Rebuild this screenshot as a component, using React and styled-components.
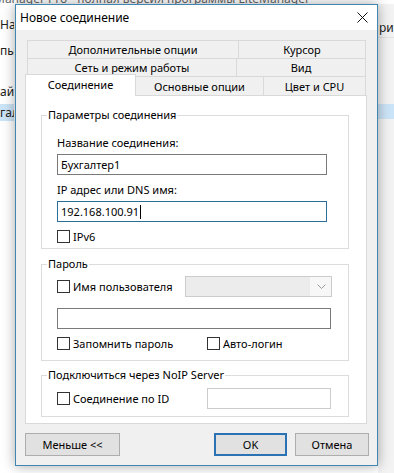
import React from 'react'
import styled, { createGlobalStyle } from 'styled-components'

const Global = createGlobalStyle`
  html, body {
    margin: 0;
    padding: 0;
    background: #ffffff;
  }
  body {
    font-family: "Noto Sans", "Liberation Sans", sans-serif;
    font-size: 11px;
    color: #000;
  }
`

const Screen = styled.div`
  position: relative;
  width: 394px;
  height: 473px;
  overflow: hidden;
  background: #ffffff;
`

/* the main program window behind the dialog */
const BackWindow = styled.div`
  display: flex;
  flex-direction: column;
  height: 100%;
`
const BackTitle = styled.div`
  height: 4px;
  overflow: hidden;
  white-space: nowrap;
  color: #666;
  font-size: 12px;
  line-height: 12px;
  span {
    display: block;
    margin: -7px 0 0 -6px;
  }
`
const BackBody = styled.div`
  flex: 1;
  display: flex;
  justify-content: space-between;
`
const SidePane = styled.div`
  width: ${p => p.$w}px;
  display: flex;
  flex-direction: column;
  overflow: hidden;
  white-space: nowrap;
  background: ${p => p.$bg || '#ffffff'};
`
const BackRow = styled.div`
  height: ${p => p.$h || 16}px;
  line-height: ${p => p.$h || 16}px;
  margin-top: ${p => p.$gap}px;
  padding-left: ${p => p.$pad || 0}px;
  font-size: 12px;
  color: #222;
  background: ${p => (p.$sel ? '#cce4f7' : 'transparent')};
  border-bottom: ${p => (p.$line ? '1px solid #e3e3e3' : 'none')};
`

/* dialog */
const Dialog = styled.div`
  position: absolute;
  left: 15px;
  top: 4px;
  width: 363px;
  height: 462px;
  box-sizing: border-box;
  border: 1px solid #3f86b2;
  background: #f0f0f0;
  box-shadow: 0 0 12px rgba(0, 0, 0, 0.35);
  display: flex;
  flex-direction: column;
`
const TitleBar = styled.div`
  height: 25px;
  flex: none;
  display: flex;
  align-items: center;
  justify-content: space-between;
  padding: 0 9px 0 4px;
  background: #ffffff;
  font-size: 12px;
`
const Body = styled.div`
  padding: 10px 0 0 9px;
  display: flex;
  flex-direction: column;
`
const TabRow = styled.div`
  display: flex;
  align-items: flex-start;
  height: ${p => p.$h}px;
  margin-left: ${p => p.$indent}px;
`
const Tab = styled.div`
  box-sizing: border-box;
  width: ${p => p.$w}px;
  height: ${p => p.$h}px;
  margin-right: -1px;
  display: flex;
  align-items: center;
  justify-content: center;
  border: 1px solid #d9d9d9;
  border-bottom: none;
  background: #f0f0f0;
  white-space: nowrap;
`
const ActiveTab = styled(Tab)`
  position: relative;
  z-index: 1;
  margin-top: -2px;
  background: #ffffff;
  padding-bottom: 2px;
`
const Panel = styled.div`
  box-sizing: border-box;
  width: 342px;
  height: 329px;
  padding: 11px 17px 0 15px;
  background: #ffffff;
  border: 1px solid #d9d9d9;
`
const Group = styled.fieldset`
  margin: ${p => p.$top || 0}px 0 0 0;
  padding: ${p => p.$pt}px 0 ${p => p.$pb}px 15px;
  min-width: 0;
  border: 1px solid #dcdcdc;
`
const Legend = styled.legend`
  margin-left: -10px;
  padding: 0 1px;
  line-height: 16px;
`
const Label = styled.div`
  line-height: 16px;
  margin-top: ${p => p.$top || 0}px;
`
const TextBox = styled.div`
  box-sizing: border-box;
  width: ${p => p.$w}px;
  height: 21px;
  margin-top: ${p => p.$top || 0}px;
  padding-left: 3px;
  display: flex;
  align-items: center;
  background: #ffffff;
  border: 1px solid ${p => (p.$focus ? '#2a6f98' : p.$disabled ? '#cccccc' : '#7a7a7a')};
  white-space: nowrap;
`
const Caret = styled.span`
  display: inline-block;
  width: 1px;
  height: 14px;
  margin-left: 1px;
  background: #000;
`
const Row = styled.div`
  display: flex;
  align-items: center;
  height: ${p => p.$h || 16}px;
  margin-top: ${p => p.$top || 0}px;
`
const Check = styled.label`
  display: flex;
  align-items: center;
  gap: 3px;
  width: ${p => (p.$w ? `${p.$w}px` : 'auto')};
  flex: none;
  white-space: nowrap;
`
const Box = styled.span`
  box-sizing: border-box;
  width: 13px;
  height: 13px;
  border: 1px solid #333333;
  background: #ffffff;
`
const Combo = styled.div`
  box-sizing: border-box;
  width: 147px;
  height: 21px;
  display: flex;
  align-items: center;
  justify-content: flex-end;
  border: 1px solid #cccccc;
  background: linear-gradient(to right, #ececec 0 124px, #f7f7f7 124px);
  padding-right: 5px;
`
const ButtonRow = styled.div`
  display: flex;
  width: 344px;
  margin-top: 9px;
  gap: 8px;
`
const Button = styled.button`
  box-sizing: border-box;
  width: ${p => p.$w}px;
  height: 23px;
  margin: 0;
  margin-left: ${p => (p.$push ? 'auto' : '0')};
  padding: 0;
  font: inherit;
  color: #000;
  background: #e1e1e1;
  border: ${p => (p.$default ? '2px solid #2b72b5' : '1px solid #adadad')};
`

const CheckItem = ({ w, children }) => (
  <Check $w={w}>
    <Box />
    <span>{children}</span>
  </Check>
)

export default function App() {
  return (
    <Screen>
      <Global />
      <BackWindow>
        <BackTitle>
          <span>Manager Pro - полная версия программы LiteManager</span>
        </BackTitle>
        <BackBody>
          <SidePane $w={14}>
            <BackRow $gap={13}>Наз</BackRow>
            <BackRow $gap={10}>пы</BackRow>
            <BackRow $gap={25}>айн</BackRow>
            <BackRow $gap={4} $h={17} $sel>гал</BackRow>
          </SidePane>
          <SidePane $w={16} $bg="#f3f3f3">
            <BackRow $gap={15} $h={18} $pad={1} $line>рий</BackRow>
            <BackRow $gap={66} $h={15} $sel />
          </SidePane>
        </BackBody>
      </BackWindow>

      <Dialog>
        <TitleBar>
          <span>Новое соединение</span>
          <svg width="11" height="11" viewBox="0 0 11 11">
            <path d="M0.5 0.5 L10.5 10.5 M10.5 0.5 L0.5 10.5" stroke="#111" strokeWidth="1" fill="none" />
          </svg>
        </TitleBar>
        <Body>
          <TabRow $h={18} $indent={2}>
            <Tab $w={212} $h={18}>Дополнительные опции</Tab>
            <Tab $w={128} $h={18}>Курсор</Tab>
          </TabRow>
          <TabRow $h={18} $indent={2}>
            <Tab $w={210} $h={18}>Сеть и режим работы</Tab>
            <Tab $w={130} $h={18}>Вид</Tab>
          </TabRow>
          <TabRow $h={19} $indent={0}>
            <ActiveTab $w={111} $h={22}>Соединение</ActiveTab>
            <Tab $w={129} $h={19}>Основные опции</Tab>
            <Tab $w={103} $h={19}>Цвет и CPU</Tab>
          </TabRow>
          <Panel>
            <Group $pt={12} $pb={4}>
              <Legend>Параметры соединения</Legend>
              <Label>Название соединения:</Label>
              <TextBox $w={270} $top={3}>Бухгалтер1</TextBox>
              <Label $top={7}>IP адрес или DNS имя:</Label>
              <TextBox $w={270} $top={3} $focus>
                192.168.100.91<Caret />
              </TextBox>
              <Row $top={6}>
                <CheckItem>IPv6</CheckItem>
              </Row>
            </Group>

            <Group $top={7} $pt={4} $pb={9}>
              <Legend>Пароль</Legend>
              <Row $h={21}>
                <CheckItem w={128}>Имя пользователя</CheckItem>
                <Combo>
                  <svg width="9" height="5" viewBox="0 0 9 5">
                    <path d="M0.5 0.5 L4.5 4.5 L8.5 0.5" stroke="#9a9a9a" strokeWidth="1" fill="none" />
                  </svg>
                </Combo>
              </Row>
              <TextBox $w={274} $top={11} />
              <Row $top={6}>
                <CheckItem w={150}>Запомнить пароль</CheckItem>
                <CheckItem>Авто-логин</CheckItem>
              </Row>
            </Group>

            <Group $top={6} $pt={5} $pb={7}>
              <Legend>Подключиться через NoIP Server</Legend>
              <Row $h={21}>
                <CheckItem w={150}>Соединение по ID</CheckItem>
                <TextBox $w={124} $disabled />
              </Row>
            </Group>
          </Panel>
          <ButtonRow>
            <Button $w={95}>Меньше &lt;&lt;</Button>
            <Button $w={73} $push $default>OK</Button>
            <Button $w={74}>Отмена</Button>
          </ButtonRow>
        </Body>
      </Dialog>
    </Screen>
  )
}
